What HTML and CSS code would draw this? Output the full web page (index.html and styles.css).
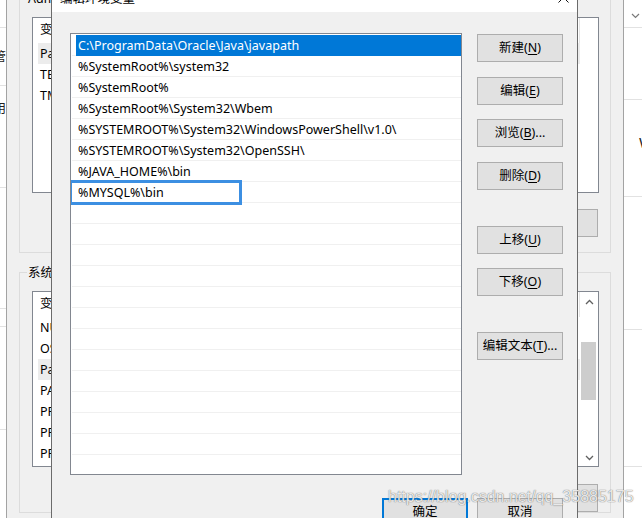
FILE: index.html
```html
<!DOCTYPE html>
<html lang="zh-CN">
<head>
<meta charset="utf-8">
<title>编辑环境变量</title>
<link rel="stylesheet" href="styles.css">
</head>
<body>
<div class="desk">
  <div class="strip strip-left">
    <div class="seg seg-l1"></div>
    <div class="seg seg-l2"><span class="clip-text">管</span></div>
    <div class="seg seg-l3"><span class="clip-text">用</span></div>
    <div class="seg seg-l4"></div>
    <div class="seg seg-l5"></div>
    <div class="seg seg-l6"></div>
    <div class="seg seg-l7"></div>
  </div>

  <div class="back-window">
    <div class="group group-user">
      <div class="group-title">Administrator 的用户变量(U)</div>
      <div class="vlist">
        <div class="vlist-body">
          <div class="vhead"><span class="c-name">变量</span><span class="c-val">值</span></div>
          <div class="vrow sel"><span class="c-name">Path</span><span class="c-val">C:\Users\Administrator\AppData\Local\Microsoft\WindowsApps;</span></div>
          <div class="vrow"><span class="c-name">TEMP</span><span class="c-val">%USERPROFILE%\AppData\Local\Temp</span></div>
          <div class="vrow"><span class="c-name">TMP</span><span class="c-val">%USERPROFILE%\AppData\Local\Temp</span></div>
        </div>
      </div>
      <div class="btn-row btn-row-user">
        <button class="btn">新建(<u>N</u>)...</button>
        <button class="btn">编辑(<u>E</u>)...</button>
        <button class="btn">删除(<u>D</u>)</button>
      </div>
    </div>

    <div class="group group-sys">
      <div class="group-title">系统变量(S)</div>
      <div class="vlist">
        <div class="vlist-body">
          <div class="vhead"><span class="c-name">变量</span><span class="c-val">值</span></div>
          <div class="vrow"><span class="c-name">NUMBER_OF_PROCESSORS</span><span class="c-val">4</span></div>
          <div class="vrow"><span class="c-name">OS</span><span class="c-val">Windows_NT</span></div>
          <div class="vrow sel"><span class="c-name">Path</span><span class="c-val">C:\ProgramData\Oracle\Java\javapath;%SystemRoot%</span></div>
          <div class="vrow"><span class="c-name">PATHEXT</span><span class="c-val">.COM;.EXE;.BAT;.CMD;.VBS;.VBE;.JS</span></div>
          <div class="vrow"><span class="c-name">PROCESSOR_ARCHITECTURE</span><span class="c-val">AMD64</span></div>
          <div class="vrow"><span class="c-name">PROCESSOR_IDENTIFIER</span><span class="c-val">Intel64 Family 6</span></div>
          <div class="vrow"><span class="c-name">PROCESSOR_LEVEL</span><span class="c-val">6</span></div>
        </div>
        <div class="vscroll">
          <div class="vscroll-arrow vscroll-up">
            <svg width="9" height="6" viewBox="0 0 9 6"><polyline points="1,5 4.5,1.5 8,5" fill="none" stroke="#606060" stroke-width="1.3"/></svg>
          </div>
          <div class="vscroll-thumb"></div>
          <div class="vscroll-fill"></div>
          <div class="vscroll-arrow vscroll-down">
            <svg width="9" height="6" viewBox="0 0 9 6"><polyline points="1,1 4.5,4.5 8,1" fill="none" stroke="#606060" stroke-width="1.3"/></svg>
          </div>
        </div>
      </div>
      <div class="btn-row btn-row-sys">
        <button class="btn">新建(<u>W</u>)...</button>
        <button class="btn">编辑(<u>I</u>)...</button>
        <button class="btn">删除(<u>L</u>)</button>
      </div>
    </div>
  </div>

  <div class="strip strip-right">
    <div class="seg seg-r1">
      <svg class="chev" width="9" height="6" viewBox="0 0 9 6"><polyline points="1,1 4.5,4.5 8,1" fill="none" stroke="#7a7a7a" stroke-width="1.2"/></svg>
    </div>
    <div class="seg seg-r2"></div>
    <div class="seg seg-r3"><span class="right-word">Windows</span></div>
    <div class="seg seg-r4"></div>
    <div class="seg seg-r5"></div>
    <div class="seg seg-r6"></div>
  </div>
</div>

<div class="front-window">
  <div class="titlebar">
    <span class="title-text">编辑环境变量</span>
    <svg class="close-x" width="11" height="11" viewBox="0 0 11 11"><path d="M0.5 0.5 L10.5 10.5 M10.5 0.5 L0.5 10.5" stroke="#111" stroke-width="1"/></svg>
  </div>
  <div class="front-body">
    <div class="front-main">
      <div class="plist">
        <div class="prow sel"><span class="pcell">C:\ProgramData\Oracle\Java\javapath</span></div>
        <div class="prow"><span class="pcell">%SystemRoot%\system32</span></div>
        <div class="prow"><span class="pcell">%SystemRoot%</span></div>
        <div class="prow"><span class="pcell">%SystemRoot%\System32\Wbem</span></div>
        <div class="prow"><span class="pcell">%SYSTEMROOT%\System32\WindowsPowerShell\v1.0\</span></div>
        <div class="prow"><span class="pcell">%SYSTEMROOT%\System32\OpenSSH\</span></div>
        <div class="prow"><span class="pcell">%JAVA_HOME%\bin</span></div>
        <div class="prow"><span class="pcell"></span></div>
        <div class="prow"><span class="pcell"></span></div>
        <div class="prow"><span class="pcell"></span></div>
        <div class="prow"><span class="pcell"></span></div>
        <div class="prow"><span class="pcell"></span></div>
        <div class="prow"><span class="pcell"></span></div>
        <div class="prow"><span class="pcell"></span></div>
        <div class="prow"><span class="pcell"></span></div>
        <div class="prow"><span class="pcell"></span></div>
        <div class="prow"><span class="pcell"></span></div>
        <div class="prow"><span class="pcell"></span></div>
        <div class="prow"><span class="pcell"></span></div>
        <div class="prow"><span class="pcell"></span></div>
        <div class="prow"><span class="pcell"></span></div>
        <div class="edit-box">%MYSQL%\bin</div>
      </div>
      <div class="side-buttons">
        <button class="btn btn-new">新建(<u>N</u>)</button>
        <button class="btn btn-edit">编辑(<u>E</u>)</button>
        <button class="btn btn-browse">浏览(<u>B</u>)...</button>
        <button class="btn btn-del">删除(<u>D</u>)</button>
        <button class="btn btn-up">上移(<u>U</u>)</button>
        <button class="btn btn-down">下移(<u>O</u>)</button>
        <button class="btn btn-text">编辑文本(<u>T</u>)...</button>
      </div>
    </div>
    <div class="front-footer">
      <button class="btn btn-ok">确定</button>
      <button class="btn">取消</button>
    </div>
  </div>
</div>

<div class="watermark">https://blog.csdn.net/qq_35885175</div>
</body>
</html>
```

FILE: styles.css
```css
* {
  box-sizing: border-box;
}

html, body {
  margin: 0;
  padding: 0;
}

body {
  width: 642px;
  height: 518px;
  overflow: hidden;
  position: relative;
  background: #ffffff;
  font-family: "Noto Sans", "Noto Sans CJK SC", sans-serif;
  font-size: 12.5px;
  color: #000;
}

.desk {
  display: flex;
  height: 518px;
}

/* far background window strips */
.strip {
  background: #ffffff;
  display: flex;
  flex-direction: column;
  overflow: hidden;
  flex: none;
}

.strip-left {
  width: 6px;
}

.strip-right {
  width: 18px;
}

.seg {
  border-bottom: 1px solid #e2e2e2;
  flex: none;
  display: flex;
  overflow: hidden;
}

.seg-l1 { height: 28px; }
.seg-l2 { height: 58px; align-items: center; justify-content: flex-end; }
.seg-l3 { height: 102px; justify-content: flex-end; padding-top: 15px; }
.seg-l4 { height: 121px; }
.seg-l5 { height: 18px; }
.seg-l6 { height: 103px; }
.seg-l7 { flex: 1; border-bottom: none; }

.clip-text {
  flex: none;
  line-height: 16px;
  color: #222;
  height: 16px;
}

.seg-r1 { height: 28px; padding: 13px 0 0 7px; }
.seg-r2 { height: 72px; }
.seg-r3 { height: 97px; padding: 33px 0 0 15px; }
.seg-r4 { height: 133px; }
.seg-r5 { height: 137px; }
.seg-r6 { flex: 1; border-bottom: none; }

.chev {
  display: block;
}

.right-word {
  font-size: 15px;
  line-height: 18px;
  color: #222;
  white-space: nowrap;
  height: 18px;
}

/* back dialog: 环境变量 */
.back-window {
  width: 618px;
  flex: none;
  background: #f0f0f0;
  border-left: 1px solid #a3a3a3;
  border-right: 1px solid #a3a3a3;
  padding: 0 12px;
  overflow: hidden;
}

.group {
  border: 1px solid #dcdcdc;
  padding: 0 11px 0 12px;
}

.group-user {
  margin-top: -2px;
  padding-bottom: 15px;
}

.group-sys {
  margin-top: 19px;
}

.group-title {
  width: fit-content;
  margin: -8px 0 0 -5px;
  padding: 0 1px;
  background: #f0f0f0;
  line-height: 16px;
  white-space: nowrap;
}

.vlist {
  margin-top: 10px;
  height: 176px;
  border: 1px solid #828790;
  background: #ffffff;
  display: flex;
  overflow: hidden;
}

.vlist-body {
  flex: 1;
  overflow: hidden;
}

.vhead,
.vrow {
  margin-left: 5px;
  width: 542px;
  display: flex;
  white-space: nowrap;
  overflow: hidden;
}

.vhead {
  height: 25px;
  line-height: 24px;
  border-right: 1px solid #e5e5e5;
}

.vrow {
  height: 21px;
  line-height: 21px;
}

.vrow.sel {
  background: #ececec;
}

.c-name {
  width: 180px;
  flex: none;
  padding-left: 2px;
  overflow: hidden;
}

.c-val {
  width: 330px;
  flex: none;
  overflow: hidden;
}

.vscroll {
  width: 17px;
  flex: none;
  display: flex;
  flex-direction: column;
  background: #ffffff;
}

.vscroll-arrow {
  display: flex;
  justify-content: center;
  align-items: center;
  flex: none;
}

.vscroll-up {
  height: 20px;
}

.vscroll-down {
  height: 17px;
}

.vscroll-thumb {
  margin-top: 30px;
  width: 15px;
  height: 58px;
  background: #cdcdcd;
  flex: none;
}

.vscroll-fill {
  flex: 1;
}

.btn-row {
  display: flex;
  justify-content: flex-end;
  gap: 9px;
  margin-right: 1px;
}

.btn-row-user {
  margin-top: 16px;
}

.btn-row-sys {
  margin-top: 17px;
}

.btn {
  width: 86px;
  height: 28px;
  border: 1px solid #adadad;
  background: #e1e1e1;
  font-family: "Noto Sans", "Noto Sans CJK SC", sans-serif;
  font-size: 12.5px;
  color: #000;
  padding: 0;
  margin: 0;
  flex: none;
  line-height: 16px;
  white-space: nowrap;
}

.btn u {
  text-decoration-thickness: 1px;
  text-underline-offset: 2px;
}

/* front dialog: 编辑环境变量 */
.front-window {
  position: absolute;
  left: 51px;
  top: -21px;
  width: 527px;
  height: 560px;
  border: 1px solid #6b6b6b;
  background: #f0f0f0;
  display: flex;
  flex-direction: column;
}

.titlebar {
  height: 32px;
  background: #ffffff;
  display: flex;
  align-items: flex-start;
  flex: none;
}

.title-text {
  margin: 11px 0 0 8px;
  line-height: 16px;
}

.close-x {
  margin: 12px 8px 0 auto;
  display: block;
}

.front-body {
  padding: 21px 14px 0 18px;
}

.front-main {
  display: flex;
  gap: 15px;
}

.plist {
  position: relative;
  width: 392px;
  height: 442px;
  border: 1px solid #828790;
  background: #ffffff;
  padding: 1px 0 0 1px;
  overflow: hidden;
  flex: none;
}

.prow {
  height: 21px;
  border-bottom: 1px solid #f0f0f0;
  padding-left: 4px;
  display: flex;
}

.pcell {
  flex: 1;
  padding-left: 2px;
  line-height: 21px;
  white-space: nowrap;
  overflow: hidden;
}

.prow.sel .pcell {
  background: #0078d7;
  color: #ffffff;
  height: 21px;
}

.edit-box {
  position: absolute;
  left: -2px;
  top: 146px;
  width: 173px;
  height: 25px;
  border: 3px solid #3c8fe2;
  background: #ffffff;
  padding-left: 6px;
  line-height: 19px;
  white-space: nowrap;
}

.side-buttons {
  display: flex;
  flex-direction: column;
  width: 86px;
  flex: none;
}

.btn-new { margin-top: 1px; }
.btn-edit { margin-top: 15px; }
.btn-browse { margin-top: 14px; }
.btn-del { margin-top: 15px; }
.btn-up { margin-top: 36px; }
.btn-down { margin-top: 14px; }
.btn-text { margin-top: 36px; }

.front-footer {
  display: flex;
  justify-content: flex-end;
  gap: 9px;
  margin-top: 23px;
}

.btn-ok {
  border: 2px solid #0078d7;
}

.watermark {
  position: absolute;
  left: 388px;
  top: 488px;
  font-family: "Liberation Sans", sans-serif;
  font-size: 16px;
  line-height: 18px;
  color: rgba(255, 255, 255, 0.85);
  text-shadow: 0 0 1px rgba(80, 80, 80, 0.7), 0 0 1px rgba(80, 80, 80, 0.5);
  white-space: nowrap;
}
```
